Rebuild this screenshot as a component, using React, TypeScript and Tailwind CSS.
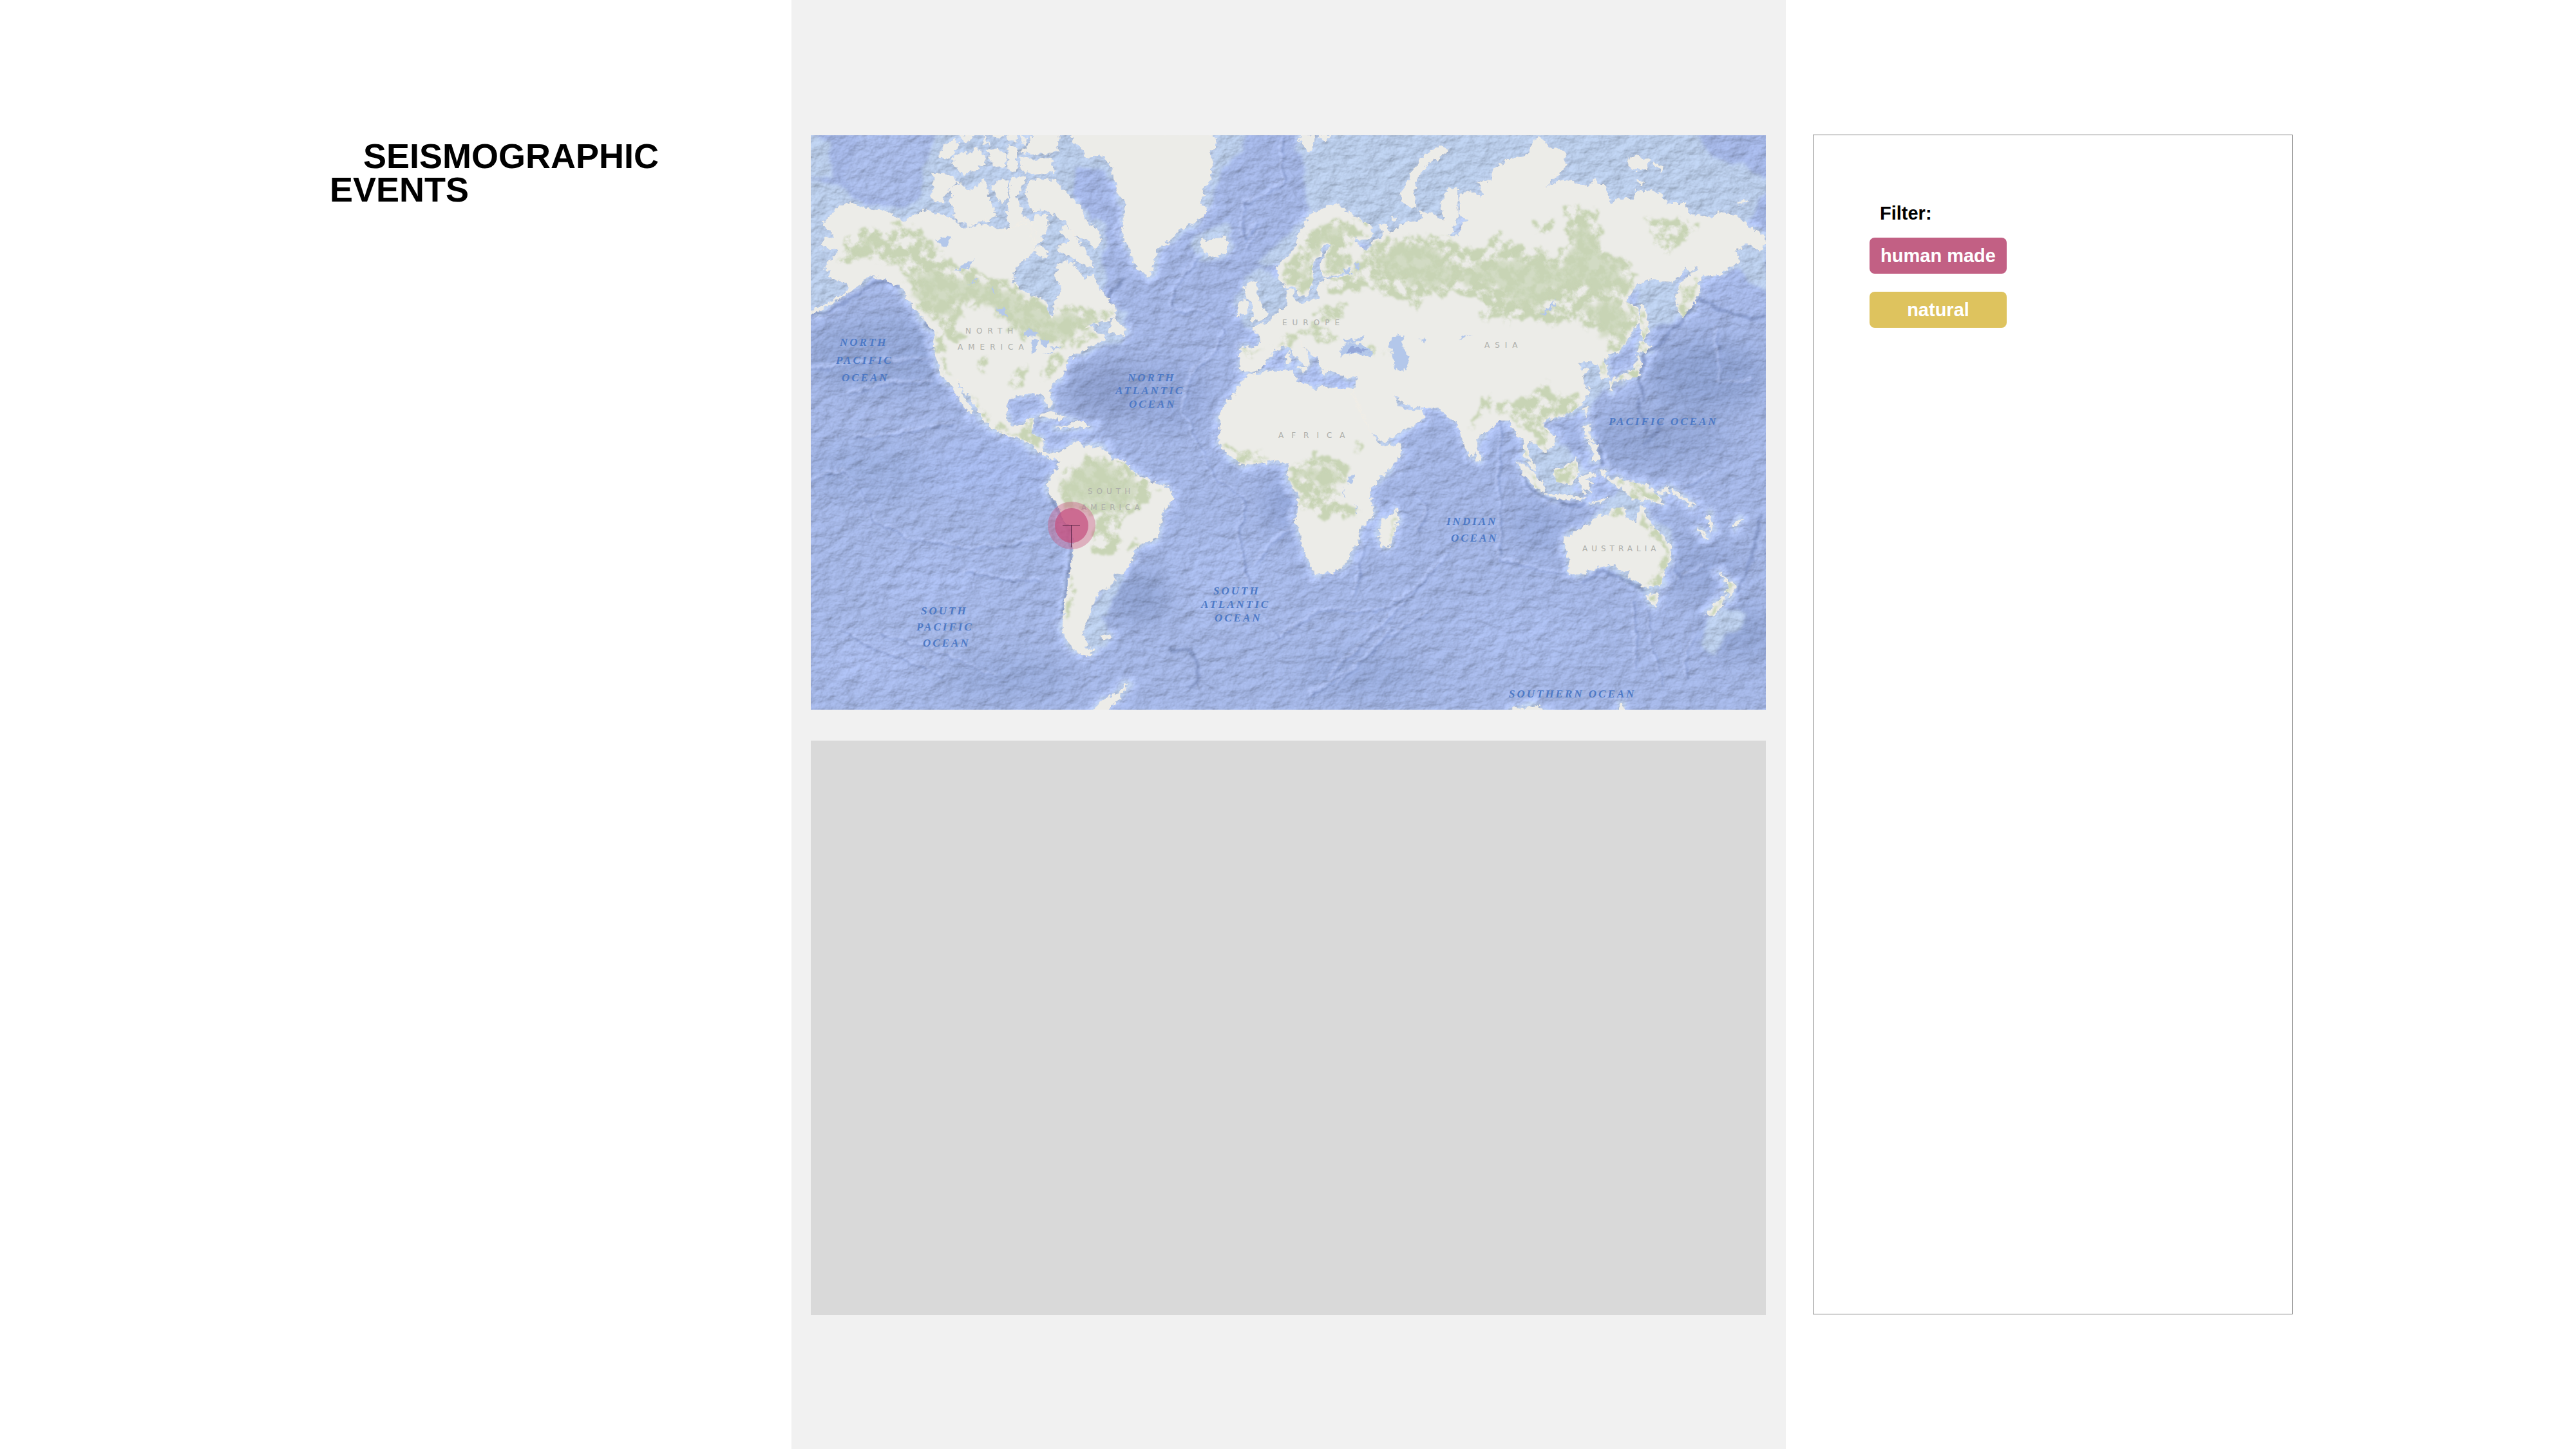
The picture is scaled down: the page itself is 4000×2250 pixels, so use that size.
const coast = [
  // North and Central America
  "M10 860L100 815 180 775 215 740 170 710 110 690 125 665 90 650 110 610 150 590 150 565 100 560 70 535 95 510 140 505 125 480 85 440 120 405 150 370 210 345 240 360 300 375 380 385 430 415 460 435 500 405 560 378 600 395 640 400 700 430 730 460 790 455 840 445 900 470 940 465 980 455 1010 430 1040 420 1060 450 1075 500 1065 560 1050 590 1010 615 975 660 970 710 1000 750 1060 780 1120 800 1130 850 1150 885 1165 860 1160 810 1195 760 1185 720 1170 680 1180 630 1240 620 1270 660 1300 700 1340 680 1370 740 1400 790 1445 830 1450 870 1400 900 1340 905 1300 930 1340 920 1350 950 1390 965 1400 985 1320 1015 1270 1045 1230 1070 1210 1110 1200 1150 1150 1190 1135 1220 1150 1280 1140 1300 1120 1270 1110 1235 1060 1230 1000 1240 945 1255 935 1300 945 1370 980 1390 1020 1380 1040 1350 1065 1345 1060 1380 1055 1420 1075 1430 1105 1440 1110 1470 1100 1500 1130 1520 1170 1505 1190 1520 1190 1545 1130 1530 1090 1505 1060 1470 1000 1440 920 1420 860 1385 835 1355 820 1330 780 1270 740 1215 705 1165 740 1250 785 1320 770 1325 720 1260 690 1200 640 1150 620 1090 605 1040 600 990 605 950 560 890 520 850 480 790 450 740 400 715 340 690 300 680 260 720 200 765 100 830 10 872Z",
  // Canadian Arctic islands
  "M600 210L640 205 690 220 710 250 660 290 640 345 610 340 585 310 600 270Z",
  "M720 255L760 290 800 270 830 240 845 260 850 320 880 370 890 400 840 430 790 440 760 450 720 430 690 400 700 370 670 340 690 310 670 290Z",
  "M870 265L920 230 945 240 940 320 920 340 890 310Z",
  "M960 230L1030 225 1010 270 980 320 1010 380 1030 440 960 460 940 420 950 330Z",
  "M620 130L650 80 700 50 715 80 690 120 660 140Z",
  "M690 130L740 110 780 120 790 80 830 120 840 160 790 190 740 210 690 170Z",
  "M850 100L900 100 935 120 930 180 880 170Z",
  "M945 90L985 100 985 200 945 190Z",
  "M1000 130L1070 145 1150 140 1155 200 1080 210 1010 195Z",
  "M1000 108L1040 90 1060 20 1180 20 1175 100 1100 118Z",
  "M720 25L780 25 770 65 735 50ZM830 25L855 75 838 65ZM870 20L920 20 900 45ZM940 30L990 30 985 60 950 55ZM1010 40L1030 40 1025 75ZM940 75L985 80 990 100 945 100Z",
  "M1040 250L1090 235 1160 240 1200 280 1240 320 1290 370 1310 430 1370 480 1375 520 1355 555 1300 510 1250 490 1210 430 1160 400 1110 380 1060 380 1030 330Z",
  "M1210 450L1260 500 1300 560 1350 640 1310 640 1250 600 1180 570 1180 540 1240 530 1190 480Z",
  "M1080 400L1130 400 1130 470 1090 530 1060 540 1050 450ZM1080 540L1110 550 1140 590 1100 600 1065 570Z",
  "M1440 880L1450 900 1490 930 1480 960 1410 945Z",
  // Caribbean
  "M1090 1335L1150 1322 1220 1350 1180 1352 1120 1338ZM1235 1362L1290 1368 1330 1390 1260 1390 1170 1392 1240 1380Z",
  // South America
  "M1175 1530L1200 1500 1260 1460 1300 1480 1390 1490 1430 1540 1490 1555 1520 1590 1560 1620 1620 1650 1680 1665 1712 1695 1710 1730 1680 1770 1660 1790 1658 1850 1640 1900 1580 1925 1540 1960 1515 2020 1490 2060 1460 2080 1420 2070 1440 2100 1430 2130 1370 2150 1350 2190 1330 2230 1325 2280 1300 2310 1290 2360 1320 2400 1300 2420 1350 2430 1310 2455 1270 2440 1220 2390 1200 2330 1205 2280 1215 2200 1230 2100 1240 2030 1255 1960 1250 1880 1240 1850 1200 1820 1180 1760 1140 1700 1130 1660 1145 1620 1180 1590 1185 1550Z",
  "M1380 2365L1420 2358 1422 2374 1390 2378Z",
  // Greenland, Iceland, Svalbard
  "M1245 20L1250 60 1290 90 1310 135 1370 120 1420 150 1440 220 1460 310 1500 340 1480 440 1480 500 1515 560 1530 620 1560 660 1605 690 1620 640 1640 560 1700 520 1740 470 1800 440 1860 400 1875 370 1830 350 1865 310 1850 280 1885 240 1895 160 1880 100 1915 90 1915 50 1880 20Z",
  "M1845 510L1870 530 1900 520 1950 500 1975 540 1960 580 1910 595 1870 585 1860 560 1840 545Z",
  "M2305 50L2340 105 2360 100 2372 30 2320 30ZM2395 30L2420 62 2445 30Z",
  // British Isles
  "M2060 720L2105 710 2100 745 2110 790 2130 840 2160 860 2140 885 2080 895 2100 870 2080 850 2085 800 2060 780 2040 740ZM2015 820L2050 795 2070 830 2050 860 2015 870Z",
  // Eurasia
  "M2025 1020L2110 1020 2130 990 2110 950 2080 935 2130 910 2180 885 2210 850 2250 830 2245 790 2245 750 2270 745 2275 800 2300 810 2350 805 2390 790 2400 720 2420 700 2500 690 2530 680 2510 672 2420 690 2400 640 2430 580 2450 540 2430 530 2410 540 2400 590 2370 610 2360 660 2370 700 2350 740 2345 780 2310 780 2280 730 2240 735 2210 710 2200 640 2240 600 2280 560 2300 500 2320 450 2350 400 2400 380 2450 350 2490 355 2520 380 2560 410 2620 440 2650 490 2620 520 2570 510 2550 500 2580 550 2620 570 2640 530 2700 500 2685 480 2680 445 2710 450 2715 485 2740 480 2770 450 2800 430 2860 430 2880 410 2860 380 2900 390 2950 410 2980 440 2965 350 2995 280 3040 280 3042 400 3030 440 3000 500 3040 505 3062 440 3100 430 3050 400 3055 310 3080 290 3120 300 3160 330 3140 250 3200 240 3210 190 3280 140 3360 130 3400 50 3430 40 3470 90 3540 110 3540 180 3500 220 3450 275 3530 235 3600 250 3640 270 3680 240 3730 270 3740 330 3765 355 3780 325 3860 330 3870 290 3940 290 3990 310 4020 350 4100 350 4130 400 4230 415 4250 390 4340 405 4400 460 4470 500 4475 530 4450 570 4390 530 4360 555 4330 560 4355 620 4310 640 4260 680 4180 680 4160 720 4160 770 4130 830 4090 880 4070 850 4060 780 4080 720 4150 660 4170 620 4130 660 4100 650 4050 710 4000 710 3930 700 3880 720 3820 800 3880 840 3885 890 3840 970 3800 1030 3750 1050 3720 1080 3740 1130 3740 1160 3710 1165 3700 1100 3650 1080 3600 1090 3610 1120 3650 1120 3620 1160 3650 1220 3620 1280 3570 1320 3500 1345 3442 1355 3440 1390 3494 1440 3488 1480 3442 1505 3419 1480 3379 1450 3362 1480 3379 1540 3413 1590 3396 1590 3356 1530 3344 1440 3310 1415 3281 1360 3230 1360 3184 1400 3132 1435 3126 1500 3103 1520 3069 1470 3040 1370 3000 1340 2960 1300 2840 1295 2790 1280 2740 1230 2760 1290 2800 1312 2870 1310 2885 1340 2860 1368 2790 1400 2690 1460 2650 1420 2600 1350 2560 1260 2550 1240 2580 1140 2540 1160 2480 1140 2440 1120 2425 1150 2400 1100 2380 1060 2340 1030 2300 985 2350 1060 2345 1110 2310 1080 2250 1015 2230 1010 2180 1030 2170 1060 2140 1090 2110 1130 2070 1130 2025 1120 2030 1050Z",
  "M2240 1050L2258 1045 2258 1090 2242 1095ZM2295 1112L2335 1112 2325 1130Z",
  // Africa and Madagascar
  "M2065 1150L2160 1130 2270 1120 2290 1180 2340 1190 2380 1220 2400 1200 2500 1215 2555 1210 2565 1260 2610 1350 2640 1420 2680 1480 2770 1470 2775 1475 2770 1520 2740 1570 2680 1620 2630 1680 2640 1740 2645 1800 2620 1830 2580 1870 2580 1930 2545 1960 2530 2010 2480 2060 2420 2070 2380 2078 2350 2020 2320 1950 2310 1890 2285 1830 2300 1770 2295 1700 2250 1640 2250 1590 2255 1565 2190 1540 2110 1560 2040 1565 1980 1520 1930 1470 1930 1430 1940 1370 1930 1340 1960 1280 2010 1230 2030 1180Z",
  "M2750 1765L2765 1810 2740 1900 2720 1945 2690 1950 2675 1900 2685 1820 2730 1800Z",
  "M3126 1500L3142 1505 3152 1530 3140 1547 3128 1535Z",
  // Russian Arctic islands
  "M2780 300L2830 200 2880 130 2960 80 2995 95 2980 120 2900 160 2850 230 2830 310 2850 370 2810 360 2780 330ZM2735 415L2755 412 2750 432 2738 430Z",
  "M3830 140L3870 125 3930 150 3920 190 3850 190ZM3950 155L4000 180 3985 195ZM3870 235L3910 255 3890 262ZM4345 350L4370 330 4395 345Z",
  // Sakhalin, Japan, Taiwan
  "M3890 820L3908 830 3930 940 3905 985 3890 900ZM3880 1010L3900 990 3940 1015 3910 1045 3885 1040ZM3880 1050L3895 1090 3880 1155 3820 1165 3755 1180 3790 1150 3850 1130 3870 1100ZM3742 1180L3770 1180 3755 1220ZM3625 1300L3648 1292 3635 1338Z",
  // Philippines and Indonesia
  "M3630 1385L3652 1380 3650 1430 3672 1460 3640 1440ZM3645 1455L3690 1480 3702 1540 3665 1540 3680 1510Z",
  "M3316 1550L3379 1590 3442 1660 3448 1695 3402 1670 3344 1600ZM3488 1590L3540 1580 3591 1535 3603 1590 3574 1660 3499 1645ZM3448 1700L3540 1706 3640 1724 3528 1728Z",
  "M3614 1615L3677 1605 3682 1618 3630 1630 3666 1650 3645 1660 3664 1688 3636 1668 3630 1698 3608 1655ZM3700 1590L3730 1590 3725 1620ZM3660 1745L3740 1720 3700 1740Z",
  "M3735 1630L3792 1625 3821 1640 3918 1660 3964 1700 4004 1750 3964 1740 3907 1710 3907 1735 3850 1720 3804 1670 3758 1655ZM3976 1688L4022 1666 4020 1690 3980 1698Z",
  "M4040 1684L4145 1750 4128 1752 4040 1696ZM4159 1860L4208 1902 4200 1910 4156 1868ZM4200 1800L4214 1808 4230 1865 4220 1868ZM4330 1840L4365 1820 4360 1832 4335 1850Z",
  // Australia and New Zealand
  "M3540 1910L3597 1875 3643 1850 3689 1805 3735 1800 3763 1765 3821 1765 3821 1810 3878 1840 3895 1750 3913 1790 3941 1840 3987 1890 4033 1940 4033 2000 3999 2070 3987 2125 3907 2135 3861 2100 3835 2085 3844 2050 3809 2065 3792 2040 3746 2030 3666 2050 3597 2080 3557 2065 3563 2010 3540 1950Z",
  "M3924 2170L3974 2170 3964 2220 3941 2210ZM4263 2065L4300 2110 4343 2125 4309 2185 4286 2150 4305 2140ZM4286 2170L4280 2210 4228 2270 4200 2260 4251 2200Z",
  // Antarctic fringe
  "M1340 2720L1380 2665 1460 2630 1500 2580 1480 2630 1400 2720ZM3795 2680L3812 2680 3812 2720 3795 2720ZM3300 2700L3420 2690 3460 2720 3300 2720Z",
].join("")

const lakes =
  "M595 520L630 520 650 495 685 500 680 525 650 548 630 535ZM697 660L740 630 790 610 760 645ZM765 720L805 700 790 718ZM890 840L930 830 945 885 920 870ZM870 745L885 740 875 770ZM1010 962L1045 930 1090 950 1075 968ZM1055 1050L1062 985 1085 980 1072 1040ZM1095 978L1130 985 1135 1010 1110 1010ZM1110 1050L1160 1040 1150 1050ZM1140 1020L1195 1015 1160 1028Z" +
  "M2490 1035L2520 1000 2570 1000 2640 1030 2650 1055 2600 1050 2540 1050 2500 1055ZM2505 975L2560 985 2610 960 2590 990 2520 1000Z" +
  "M2720 990L2760 960 2795 960 2780 1010 2810 1060 2802 1125 2745 1120 2740 1060ZM2865 980L2890 970 2880 1005ZM3425 870L3480 820 3495 785 3490 825 3440 872ZM3050 985L3065 965 3115 965 3070 972Z" +
  "M2530 1620L2560 1612 2552 1645 2530 1648ZM2502 1665L2520 1720 2512 1715ZM2560 1740L2570 1792 2562 1790ZM2510 655L2535 648 2540 678 2515 675ZM2565 620L2582 625 2580 658 2566 650Z"

const forest =
  "M150 640L160 560 190 500 300 480 390 460 470 440 540 480 600 540 640 600 720 640 800 650 860 690 950 710 1050 780 1110 810 1150 880 1180 830 1300 840 1380 840 1440 850 1400 890 1330 910 1260 960 1200 1010 1080 980 950 940 940 880 860 840 740 820 720 870 730 990 690 1000 650 940 620 900 560 870 500 780 480 700 420 640 330 610 270 600Z" +
  "M1240 990L1340 920 1350 960 1260 1030ZM1100 1130L1150 1050 1220 1070 1180 1120 1100 1180ZM610 920L650 930 640 1050 680 1140 660 1130 620 1060ZM780 1230L860 1350 900 1420 820 1330ZM950 1170L1030 1110 1010 1200 960 1230ZM800 1080L850 1060 850 1140 810 1120ZM840 1360L1000 1420 1040 1350 1070 1350 1060 1420 1110 1440 1100 1490 1000 1440 880 1400Z" +
  "M1170 1690L1180 1620 1230 1580 1310 1540 1400 1520 1440 1550 1490 1560 1560 1620 1640 1680 1600 1740 1500 1800 1480 1850 1460 1970 1340 1970 1340 1900 1370 1800 1300 1780 1230 1770ZM1500 1930L1570 1910 1520 1980ZM1220 2200L1240 2080 1255 2120 1240 2260 1215 2270Z" +
  "M2205 680L2280 570 2350 480 2450 420 2560 430 2640 490 2570 510 2530 540 2550 620 2500 680 2420 680 2400 620 2440 560 2410 540 2360 640 2370 700 2340 780 2290 750 2240 730Z" +
  "M2560 640L2650 540 2720 505 2990 500 3040 540 3150 560 3220 480 3260 520 3400 560 3500 600 3560 520 3530 380 3560 350 3620 360 3700 400 3710 520 3730 580 3830 600 3850 680 3880 700 3820 800 3880 850 3870 900 3800 1020 3720 1040 3740 950 3640 940 3600 880 3520 900 3470 930 3380 880 3270 890 3160 890 3140 780 3000 770 2900 770 2850 860 2830 800 2700 770 2600 740 2520 780 2420 760 2420 700 2530 680Z" +
  "M2200 1020L2230 960 2350 920 2440 920 2470 980 2420 1010 2360 960 2260 1000ZM2390 850L2520 800 2500 880 2420 900ZM2030 1020L2170 1030 2050 1050ZM2600 1000L2720 1040 2600 1060Z" +
  "M3100 1410L3150 1240 3240 1280 3310 1270 3450 1180 3500 1250 3620 1230 3600 1300 3500 1340 3430 1360 3490 1450 3440 1490 3380 1400 3310 1400 3280 1320 3180 1290ZM3350 1490L3400 1560 3410 1590 3360 1530ZM3390 440L3480 430 3480 480 3400 490ZM3920 430L4170 440 4150 480 4060 560 4010 570 3940 480ZM3700 1060L3740 1130 3720 1160ZM3760 1180L3880 1050 3890 1150ZM3885 820L3930 940 3900 1040 3890 960ZM4065 850L4080 740 4160 680 4140 800 4090 870Z" +
  "M2255 1580L2320 1560 2400 1510 2510 1550 2520 1600 2490 1680 2500 1760 2600 1780 2550 1800 2380 1810 2300 1750 2310 1690 2260 1640ZM1940 1470L2180 1530 2110 1560 2040 1565ZM2560 1480L2590 1460 2580 1510ZM2730 1860L2755 1790 2740 1890 2720 1940Z" +
  "M3330 1560L3440 1670 3420 1670ZM3488 1590L3591 1535 3603 1590 3574 1660 3499 1645ZM3750 1640L3821 1640 3918 1660 3990 1740 3850 1710ZM3750 1800L3763 1765 3821 1765 3815 1800ZM3885 1840L3900 1770 3920 1830 4033 1950 4020 2040 3987 2125 3920 2130 3990 2040 4000 1960ZM3924 2170L3974 2170 3955 2215ZM4290 2100L4343 2125 4309 2185 4280 2160ZM4210 2250L4280 2190 4230 2260Z"

// Cores of the forest belts, where the tree cover has no gaps
const denseForest =
  "M490 700L600 640 700 700 860 720 1040 800 1130 860 1300 870 1400 860 1280 940 1180 980 1060 950 960 900 860 820 700 790 700 900 640 880 570 820 520 780ZM200 560L300 510 380 500 380 540 260 580Z" +
  "M1200 1640L1300 1560 1400 1550 1540 1640 1500 1740 1420 1780 1320 1760 1220 1740Z" +
  "M2300 640L2400 480 2500 450 2560 490 2420 520 2350 640 2340 720 2300 740ZM2440 620L2520 560 2530 640 2440 670Z" +
  "M2640 620L2760 530 2940 540 2990 640 3100 660 3250 600 3400 600 3540 640 3570 480 3660 420 3680 560 3800 640 3830 740 3700 760 3600 720 3480 760 3400 840 3280 800 3220 720 3000 720 2860 740 2760 680ZM3600 820L3780 800 3850 880 3780 980 3680 900Z" +
  "M2280 1600L2360 1570 2480 1570 2490 1630 2440 1670 2330 1640Z"

const shelf =
  "M0 250L150 250 230 330 430 370 550 330 545 150 610 0 1480 0 1460 330 1400 200 1260 200 1270 330 1400 470 1390 800 1500 850 1480 980 1250 1060 1100 900 900 760 300 690 150 800 0 840ZM0 0L100 60 140 220 0 250Z" +
  "M2280 30L2330 200 2320 300 2360 400 2700 520 3300 260 4475 500 4500 770 4400 700 4320 640 4360 500 4500 240 4360 170 4220 110 4130 0 2900 0ZM1900 0L2070 30 2000 130 1900 300 1870 400 1700 540 1640 580 1700 480 1880 300Z" +
  "M1840 480L1960 440 2000 540 1960 620 1840 610 1790 540ZM2040 690L2140 640 2220 720 2300 780 2400 640 2420 700 2400 800 2240 860 2150 920 2060 930 2000 820ZM2100 620L2300 450 2320 520 2180 640Z" +
  "M3890 710L4060 700 4060 880 3930 940 3890 880ZM3600 1080L3710 1110 3740 1190 3640 1320 3560 1340ZM3380 1470L3440 1510 3500 1460 3590 1530 3570 1720 3430 1690 3340 1560Z" +
  "M3560 1880L3680 1790 3800 1680 3900 1740 3900 1850 3820 1840ZM3620 2060L3760 2010 3920 2130 3980 2140 3970 2190 3910 2160 3800 2080 3700 2050ZM1440 2070L1510 2040 1400 2270 1420 2400 1330 2420 1280 2350Z" +
  "M4200 2290L4300 2220 4390 2270 4360 2330 4290 2370 4240 2440 4180 2420ZM1500 1560L1640 1670 1560 1640ZM3940 1800L4020 1860 4050 1960 3990 1900Z"

const ridges = [
  "M2225 30L2230 170 2240 230 2200 280 2080 340 2040 350M2040 350L2050 520 2110 440M2060 560L2120 480M1850 590L1720 750 1710 840",
  "M1710 850L1880 860 1960 940 1900 1060 1800 1150 1760 1300 1850 1500 1930 1640 2060 1740 2020 1900 2080 2150 2200 2380 2400 2250 2700 2250 2900 2100",
  "M27 1645L180 1595 270 1700 320 1820 480 1910 760 1960 960 1940 1120 1910M27 1130L200 1100 400 1080 600 1080M200 1230L400 1190 600 1180M230 1450L700 1380",
  "M740 2070L900 2095 1100 2110M160 2330L300 2420 480 2480 640 2560M350 2350L560 2420 720 2480 900 2560",
  "M2600 1940L2585 2110 2560 2180M2830 1680L2890 1750 2890 1830 2850 1880M3240 1350L3240 1990M3230 2000L3400 2050 3550 2080",
  "M4250 940L4270 1180 4330 1190 4420 1170M4100 1670L4240 1600M4050 2000L4070 2100 4200 2040M3865 2200L3870 2360 3880 2520M3930 2240L3950 2400 4000 2600M4150 2360L4100 2480 4120 2560",
  "M2440 2560L2600 2400 2760 2250 3000 1980M2480 2600L2700 2380 2900 2260M2350 2640L2560 2520 2740 2330M2100 2040L2210 1900 2290 1870",
]

const trenches = [
  "M27 870L140 830 250 770 330 710 370 700 450 740",
  "M600 940L560 900M1130 1680L1190 1800 1235 1870 1240 1960 1225 2080 1200 2260",
  "M4475 870L4390 880 4280 850 4160 790 4060 920 3990 1000 3920 1050 3890 1140 3910 1270M3880 1260L3920 1420",
  "M4000 1350L3960 1430 3900 1480M3695 1450L3720 1580M3330 1600L3400 1700 3520 1740 3640 1755M4455 1800L4430 1920 4390 2050 4340 2160",
  "M1700 2430L1790 2430 1840 2500 1830 2570 1790 2610M3620 2110L3720 2060 3840 2110 3900 2150M2030 1130L2140 1100M1500 690L1420 780 1440 850",
]

type Label = { text: string; x: number; y: number }

const oceanLabels: Label[] = [
  { text: "NORTH", x: 1304, y: 537 },
  { text: "PACIFIC", x: 1298, y: 565 },
  { text: "OCEAN", x: 1307, y: 592 },
  { text: "NORTH", x: 1751, y: 592 },
  { text: "ATLANTIC", x: 1732, y: 612 },
  { text: "OCEAN", x: 1753, y: 633 },
  { text: "PACIFIC OCEAN", x: 2498, y: 660 },
  { text: "INDIAN", x: 2246, y: 815 },
  { text: "OCEAN", x: 2253, y: 841 },
  { text: "SOUTH", x: 1430, y: 954 },
  { text: "PACIFIC", x: 1423, y: 979 },
  { text: "OCEAN", x: 1433, y: 1004 },
  { text: "SOUTH", x: 1884, y: 923 },
  { text: "ATLANTIC", x: 1865, y: 944 },
  { text: "OCEAN", x: 1886, y: 965 },
  { text: "SOUTHERN OCEAN", x: 2343, y: 1083 },
]

const landLabels: (Label & { tracking: string })[] = [
  { text: "NORTH", x: 1499, y: 518, tracking: "tracking-[8px]" },
  { text: "AMERICA", x: 1487, y: 543, tracking: "tracking-[8px]" },
  { text: "EUROPE", x: 1991, y: 505, tracking: "tracking-[8px]" },
  { text: "ASIA", x: 2305, y: 540, tracking: "tracking-[8px]" },
  { text: "AFRICA", x: 1985, y: 680, tracking: "tracking-[12px]" },
  { text: "SOUTH", x: 1689, y: 767, tracking: "tracking-[6px]" },
  { text: "AMERICA", x: 1679, y: 792, tracking: "tracking-[6px]" },
  { text: "AUSTRALIA", x: 2457, y: 856, tracking: "tracking-[6px]" },
]

function Marker() {
  return (
    <g>
      <circle cx="1664" cy="816" r="37" fill="#c8577f" fillOpacity="0.4" />
      <ellipse cx="1664" cy="816" rx="26" ry="27" fill="#c5517f" fillOpacity="0.72" />
      <path d="M1650 815.5h27M1663.5 816v34" stroke="#5a2546" strokeWidth="1" fill="none" />
    </g>
  )
}

function WorldMap() {
  return (
    <svg
      role="img"
      aria-label="World map of seismographic events"
      viewBox="1259 210 1483 892"
      preserveAspectRatio="none"
      className="block aspect-[1483/892] w-full"
    >
      <defs>
        <filter id="relief" x="0" y="0" width="4500" height="2720" filterUnits="userSpaceOnUse" colorInterpolationFilters="sRGB">
          <feTurbulence type="fractalNoise" baseFrequency="0.014 0.019" numOctaves="4" seed="7" result="n" />
          <feColorMatrix in="n" type="matrix" values="0 0 0 0 0  0 0 0 0 0  0 0 0 0 0  1 0 0 0 0" result="h" />
          <feDiffuseLighting in="h" surfaceScale="9" diffuseConstant="1" lightingColor="#ffffff" result="l">
            <feDistantLight azimuth="225" elevation="62" />
          </feDiffuseLighting>
          <feComposite in="SourceGraphic" in2="l" operator="arithmetic" k1="0.6" k2="0.46" k3="0" k4="0" />
        </filter>
        <filter id="soft" x="0" y="0" width="4500" height="2720" filterUnits="userSpaceOnUse" colorInterpolationFilters="sRGB">
          <feTurbulence type="fractalNoise" baseFrequency="0.012" numOctaves="3" seed="3" result="n" />
          <feDisplacementMap in="SourceGraphic" in2="n" scale="60" xChannelSelector="R" yChannelSelector="G" result="d" />
          <feGaussianBlur in="d" stdDeviation="8" />
        </filter>
        <filter id="deep" x="0" y="0" width="4500" height="2720" filterUnits="userSpaceOnUse" colorInterpolationFilters="sRGB">
          <feTurbulence type="fractalNoise" baseFrequency="0.015" numOctaves="4" seed="12" result="n" />
          <feDisplacementMap in="SourceGraphic" in2="n" scale="40" xChannelSelector="R" yChannelSelector="G" result="d" />
          <feGaussianBlur in="d" stdDeviation="4" />
        </filter>
        <filter id="basin" x="0" y="0" width="4500" height="2720" filterUnits="userSpaceOnUse">
          <feGaussianBlur stdDeviation="60" />
        </filter>
        <filter id="coast" x="0" y="0" width="4500" height="2720" filterUnits="userSpaceOnUse" colorInterpolationFilters="sRGB">
          <feTurbulence type="fractalNoise" baseFrequency="0.045" numOctaves="3" seed="5" result="n" />
          <feDisplacementMap in="SourceGraphic" in2="n" scale="34" xChannelSelector="R" yChannelSelector="G" result="d" />
          <feGaussianBlur in="d" stdDeviation="1" />
        </filter>
        <filter id="woods" x="0" y="0" width="4500" height="2720" filterUnits="userSpaceOnUse" colorInterpolationFilters="sRGB">
          <feTurbulence type="fractalNoise" baseFrequency="0.02" numOctaves="5" seed="21" result="n" />
          <feColorMatrix in="n" type="matrix" values="0 0 0 0 0  0 0 0 0 0  0 0 0 0 0  4 0 0 0 -1.3" result="m" />
          <feDisplacementMap in="SourceGraphic" in2="n" scale="90" xChannelSelector="G" yChannelSelector="B" result="d" />
          <feGaussianBlur in="d" stdDeviation="5" result="b" />
          <feComposite in="b" in2="m" operator="in" />
        </filter>
        <filter id="canopy" x="0" y="0" width="4500" height="2720" filterUnits="userSpaceOnUse" colorInterpolationFilters="sRGB">
          <feTurbulence type="fractalNoise" baseFrequency="0.02" numOctaves="5" seed="33" result="n" />
          <feDisplacementMap in="SourceGraphic" in2="n" scale="120" xChannelSelector="R" yChannelSelector="G" result="d" />
          <feGaussianBlur in="d" stdDeviation="8" />
        </filter>
        <clipPath id="land">
          <path d={coast} />
        </clipPath>
      </defs>

      <g transform="translate(1250 200) scale(0.33333)">
        <g filter="url(#relief)">
          <rect x="0" y="0" width="4500" height="2720" fill="#a4b6e5" />
          <g filter="url(#basin)">
            <ellipse cx="400" cy="1050" rx="420" ry="180" fill="#94a8d8" />
            <ellipse cx="300" cy="1600" rx="300" ry="140" fill="#9bafdf" />
            <ellipse cx="850" cy="1600" rx="300" ry="140" fill="#a6b9ec" />
            <ellipse cx="1450" cy="1220" rx="230" ry="130" fill="#8d9fce" />
            <ellipse cx="1700" cy="1250" rx="180" ry="160" fill="#96a9da" />
            <ellipse cx="1560" cy="2180" rx="150" ry="120" fill="#8fa2d1" />
            <ellipse cx="2250" cy="1750" rx="120" ry="140" fill="#93a6d8" />
            <ellipse cx="2600" cy="2540" rx="280" ry="110" fill="#98abdb" />
            <ellipse cx="950" cy="2560" rx="300" ry="100" fill="#98abdb" />
            <ellipse cx="4200" cy="1150" rx="280" ry="170" fill="#8fa3d3" />
            <ellipse cx="3950" cy="1450" rx="360" ry="130" fill="#94a7d7" />
            <ellipse cx="3420" cy="1850" rx="150" ry="120" fill="#97aadb" />
            <ellipse cx="4150" cy="2050" rx="200" ry="140" fill="#96a9d9" />
            <ellipse cx="4380" cy="2350" rx="180" ry="120" fill="#93a6d6" />
            <ellipse cx="600" cy="2100" rx="300" ry="120" fill="#a9bbec" />
            <ellipse cx="300" cy="2480" rx="220" ry="110" fill="#abbdee" />
            <ellipse cx="3350" cy="2350" rx="300" ry="140" fill="#a9bbeb" />
            <ellipse cx="1950" cy="2100" rx="250" ry="200" fill="#a9bbeb" />
          </g>
          <g filter="url(#soft)">
            <path d={coast} fill="#b3c5f5" stroke="#b3c5f5" strokeWidth="70" strokeLinejoin="round" />
            <path d={shelf} fill="#bacdea" />
            <path d={coast} fill="#bdcfec" stroke="#bdcfec" strokeWidth="22" strokeLinejoin="round" />
          </g>
          <g filter="url(#deep)" fill="none" strokeLinejoin="round">
            <path d={ridges.join("")} stroke="#b9caf9" strokeWidth="20" opacity="0.6" transform="translate(-8 -8)" />
            <path d={ridges.join("")} stroke="#7e92c6" strokeWidth="7" opacity="0.8" />
            <path d={trenches.join("")} stroke="#7487b8" strokeWidth="16" opacity="0.6" />
          </g>
          <g filter="url(#soft)">
            <path d="M250 20L610 20 560 180 540 320 420 350 230 300 180 240Z" fill="#a9bbe8" />
            <path d="M1260 190L1340 200 1400 340 1400 440 1330 420 1270 290Z" fill="#a5b7e7" />
            <path d="M4260 690L4330 650 4475 790 4470 860 4380 870 4240 820ZM4400 60L4475 30 4475 160 4400 150Z" fill="#a7b9e9" />
          </g>
        </g>
        <path d={coast} fill="#ecece8" stroke="#f0ede6" strokeWidth="4" strokeLinejoin="round" filter="url(#coast)" />
        <g clipPath="url(#land)">
          <path d={forest} fill="#c8d4b5" filter="url(#woods)" />
          <path d={denseForest} fill="#c8d4b5" opacity="0.7" filter="url(#canopy)" />
        </g>
        <path d={lakes} fill="#b3c7ea" filter="url(#coast)" />
        <path d="M2510 1040L2560 1012 2630 1035 2560 1045Z" fill="#94a7d8" filter="url(#coast)" />
      </g>

      <g className="font-['Liberation_Serif',serif] text-[17px] font-bold italic tracking-[3px]" fill="#4d79c6">
        {oceanLabels.map((l) => (
          <text key={`${l.text}-${l.x}`} x={l.x} y={l.y}>
            {l.text}
          </text>
        ))}
      </g>
      <g className="font-['DejaVu_Sans',sans-serif] text-[12px]" fill="#acaeaa">
        {landLabels.map((l) => (
          <text key={`${l.text}-${l.x}`} x={l.x} y={l.y} className={l.tracking}>
            {l.text}
          </text>
        ))}
      </g>
      <Marker />
    </svg>
  )
}

function FilterPanel() {
  return (
    <aside className="my-[209px] mr-[440px] ml-[42px] border border-[#808080] pt-[105px] pl-[87px]">
      <h2 className="pl-4 text-[29px] leading-8 font-bold">Filter:</h2>
      <div className="mt-[22px] flex w-[213px] flex-col gap-7">
        <button type="button" className="h-14 rounded-lg bg-[#c26084] text-[29px] leading-8 font-bold whitespace-nowrap text-white">
          human made
        </button>
        <button type="button" className="h-14 rounded-lg bg-[#dec35e] text-[29px] leading-8 font-bold text-white">
          natural
        </button>
      </div>
    </aside>
  )
}

export default function App() {
  return (
    <div className="grid min-h-screen grid-cols-[1229fr_1544fr_1227fr] bg-white font-['Liberation_Sans',Arial,sans-serif] text-black">
      <header className="pt-[216px] pl-[512px]">
        <h1 className="text-[54px] leading-[52px] font-bold">
          <span className="block pl-[52px]">SEISMOGRAPHIC</span>
          <span className="block">EVENTS</span>
        </h1>
      </header>
      <main className="flex flex-col gap-12 bg-[#f1f1f1] pt-[210px] pr-[31px] pb-[208px] pl-[30px]">
        <WorldMap />
        <section aria-label="Event details" className="flex-1 bg-[#d9d9d9]" />
      </main>
      <FilterPanel />
    </div>
  )
}
